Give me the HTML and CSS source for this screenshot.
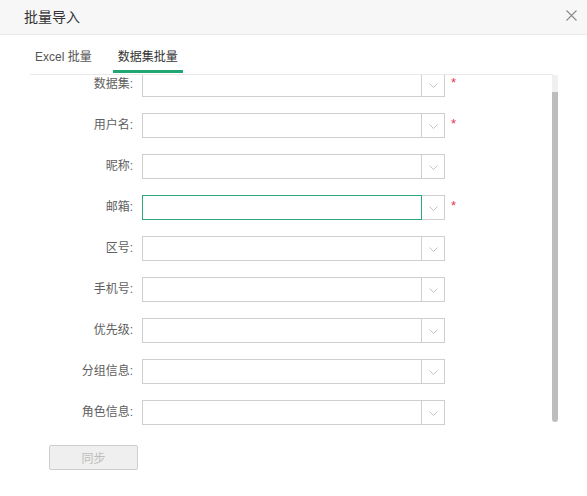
FILE: index.html
```html
<!DOCTYPE html>
<html lang="zh">
<head>
<meta charset="utf-8">
<title>批量导入</title>
<link rel="stylesheet" href="styles.css">
</head>
<body>
<div class="dialog">
  <div class="header">
    <span class="title">批量导入</span>
    <svg class="close" width="11" height="11" viewBox="0 0 11 11"><path d="M0.5 0.5 L10.5 10.5 M10.5 0.5 L0.5 10.5" stroke="#8a8a8a" stroke-width="1.1" fill="none"/></svg>
  </div>
  <div class="body">
    <div class="tabs">
      <div class="tab">Excel 批量</div>
      <div class="tab active">数据集批量</div>
    </div>
    <div class="scroll">
      <div class="form">
        <div class="row"><label class="label">数据集:</label><div class="select"><div class="input"></div><div class="arrow"><svg width="9" height="5" viewBox="0 0 9 5"><path d="M0.5 0.5 L4.5 4.5 L8.5 0.5" stroke="#c4c4c4" fill="none"/></svg></div></div><span class="req">*</span></div>
        <div class="row"><label class="label">用户名:</label><div class="select"><div class="input"></div><div class="arrow"><svg width="9" height="5" viewBox="0 0 9 5"><path d="M0.5 0.5 L4.5 4.5 L8.5 0.5" stroke="#c4c4c4" fill="none"/></svg></div></div><span class="req">*</span></div>
        <div class="row"><label class="label">昵称:</label><div class="select"><div class="input"></div><div class="arrow"><svg width="9" height="5" viewBox="0 0 9 5"><path d="M0.5 0.5 L4.5 4.5 L8.5 0.5" stroke="#c4c4c4" fill="none"/></svg></div></div></div>
        <div class="row"><label class="label">邮箱:</label><div class="select"><div class="input focus"></div><div class="arrow"><svg width="9" height="5" viewBox="0 0 9 5"><path d="M0.5 0.5 L4.5 4.5 L8.5 0.5" stroke="#c4c4c4" fill="none"/></svg></div></div><span class="req">*</span></div>
        <div class="row"><label class="label">区号:</label><div class="select"><div class="input"></div><div class="arrow"><svg width="9" height="5" viewBox="0 0 9 5"><path d="M0.5 0.5 L4.5 4.5 L8.5 0.5" stroke="#c4c4c4" fill="none"/></svg></div></div></div>
        <div class="row"><label class="label">手机号:</label><div class="select"><div class="input"></div><div class="arrow"><svg width="9" height="5" viewBox="0 0 9 5"><path d="M0.5 0.5 L4.5 4.5 L8.5 0.5" stroke="#c4c4c4" fill="none"/></svg></div></div></div>
        <div class="row"><label class="label">优先级:</label><div class="select"><div class="input"></div><div class="arrow"><svg width="9" height="5" viewBox="0 0 9 5"><path d="M0.5 0.5 L4.5 4.5 L8.5 0.5" stroke="#c4c4c4" fill="none"/></svg></div></div></div>
        <div class="row"><label class="label">分组信息:</label><div class="select"><div class="input"></div><div class="arrow"><svg width="9" height="5" viewBox="0 0 9 5"><path d="M0.5 0.5 L4.5 4.5 L8.5 0.5" stroke="#c4c4c4" fill="none"/></svg></div></div></div>
        <div class="row"><label class="label">角色信息:</label><div class="select"><div class="input"></div><div class="arrow"><svg width="9" height="5" viewBox="0 0 9 5"><path d="M0.5 0.5 L4.5 4.5 L8.5 0.5" stroke="#c4c4c4" fill="none"/></svg></div></div></div>
      </div>
      <div class="scrollbar">
        <div class="sb-top"></div>
        <div class="sb-thumb"></div>
      </div>
    </div>
    <div class="footer">
      <button class="btn" disabled>同步</button>
    </div>
  </div>
</div>
</body>
</html>
```

FILE: styles.css
```css
* { box-sizing: border-box; }
html, body { margin: 0; padding: 0; background: #fff; }
body {
  font-family: "Liberation Sans", "Noto Sans CJK SC", sans-serif;
  font-size: 12px;
  color: #333;
  width: 587px;
  height: 496px;
  overflow: hidden;
}
.dialog { width: 587px; height: 496px; display: flex; flex-direction: column; }
.header {
  height: 35px;
  background: #f7f7f7;
  border-bottom: 1px solid #e9e9e9;
  display: flex;
  align-items: center;
  justify-content: space-between;
  padding: 0 10px 1px 24px;
}
.title { font-size: 14px; color: #333; line-height: 16px; }
.close { display: block; margin-top: -3px; }
.body { padding: 0 29px 0 30px; }
.tabs {
  display: flex;
  height: 40px;
  border-bottom: 1px solid #e8e8e8;
  margin-right: 5px;
}
.tab {
  height: 38px;
  padding: 14px 5px 5px;
  line-height: 16px;
  font-size: 12px;
  color: #555;
  border-bottom: 3px solid transparent;
  margin-right: 16px;
}
.tab.active { color: #333; border-bottom-color: #1fa673; }
.scroll {
  display: flex;
  height: 350px;
  overflow: hidden;
}
.form {
  flex: 1;
  display: flex;
  flex-direction: column;
  gap: 16px;
  margin-top: -3px;
}
.row { display: flex; align-items: flex-start; height: 25px; }
.label {
  width: 103px;
  margin-right: 9px;
  text-align: right;
  line-height: 25px;
  color: #606060;
  font-size: 12px;
}
.select { display: flex; height: 25px; }
.input {
  width: 280px;
  height: 25px;
  border: 1px solid #cfcfcf;
  background: #fff;
}
.input.focus { border-color: #2aa878; }
.arrow {
  width: 23px;
  height: 25px;
  border: 1px solid #cfcfcf;
  border-left: none;
  display: flex;
  align-items: center;
  justify-content: center;
  padding-top: 2px;
}
.arrow svg { display: block; }
.req {
  color: #e8364f;
  font-size: 13px;
  line-height: 14px;
  margin-left: 6px;
  margin-top: 4px;
}
.scrollbar {
  width: 6px;
  display: flex;
  flex-direction: column;
}
.sb-top { height: 17px; background: #f0f0f0; }
.sb-thumb { height: 330px; background: #bdbdbd; border-radius: 0 0 3px 3px; }
.footer { padding: 20px 0 0 19px; }
.btn {
  width: 89px;
  height: 25px;
  background: #efefef;
  border: 1px solid #cfcfcf;
  border-radius: 2px;
  color: #bdbdbd;
  font-family: "Liberation Sans", "Noto Sans CJK SC", sans-serif;
  font-size: 12px;
  padding: 0;
}
```
